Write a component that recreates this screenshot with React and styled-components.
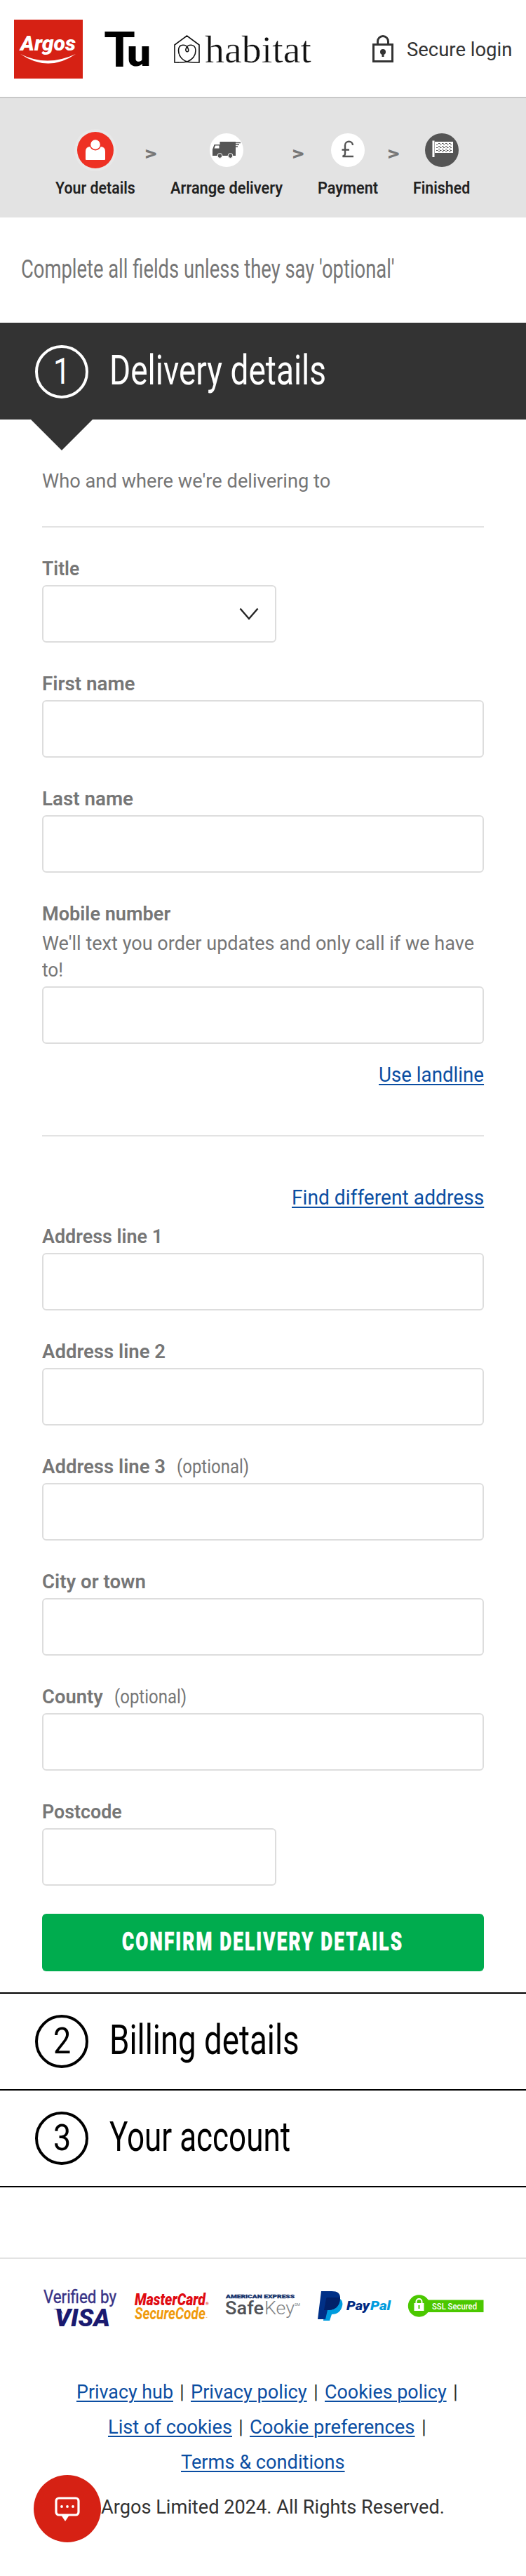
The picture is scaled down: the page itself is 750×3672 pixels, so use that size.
import React, {useLayoutEffect, useRef, useState} from "react";
import styled, {createGlobalStyle} from "styled-components";

const FONT = `Roboto, "Liberation Sans", sans-serif`;

function Fit({width, children}) {
	const ref = useRef();
	const [scale, setScale] = useState(1);

	useLayoutEffect(() => {
		setScale(width / ref.current.offsetWidth);
	}, [width]);

	return (
		<FitBox $width={width}>
			<FitText ref={ref} style={{transform: `scaleX(${scale})`}}>
				{children}
			</FitText>
		</FitBox>
	);
}

function ArgosLogo() {
	return (
		<svg width="98" height="84" viewBox="20 28 98 84">
			<rect x="20" y="28" width="98" height="84" fill="#d62114" />
			<text x="29" y="72" fontSize="30" fontWeight="900" fontStyle="italic" textLength="79" lengthAdjust="spacingAndGlyphs" fill="#fff">Argos</text>
			<path d="M29 77 Q67 96 108 77 Q69 104 29 77Z" fill="#fff" />
		</svg>
	);
}

function TuLogo() {
	return (
		<svg width="66" height="56" viewBox="148 42 66 56">
			<text x="148" y="95" fontSize="71" fontWeight="700" textLength="45" lengthAdjust="spacingAndGlyphs">T</text>
			<text x="181" y="94" fontSize="54" fontWeight="900" textLength="34" lengthAdjust="spacingAndGlyphs">u</text>
		</svg>
	);
}

function HabitatLogo() {
	return (
		<svg width="198" height="46" viewBox="248 47 198 46">
			<g fill="none" stroke="#111" strokeWidth="1.6">
				<path d="M267 88 C262 89 256 89 249 89 V64 L266.500 51 L284 64 V89 C277 89 271 89 267 88 C258 85 254.500 78 254.500 72 C254.500 62 266 62 268.500 70 C270 75 264 75 265 70 C267 62 279 62 279 72 C279 78 276 84 267 88Z" />
			</g>
			<text x="292" y="89" fontSize="55" fontFamily="Liberation Serif, serif" textLength="152" lengthAdjust="spacingAndGlyphs" fill="#111" stroke="#fff" strokeWidth="0.500">habitat</text>
		</svg>
	);
}

function LockIcon() {
	return (
		<svg width="30" height="40" viewBox="0 0 30 40">
			<rect x="1.500" y="13.500" width="27" height="24" fill="none" stroke="#333" strokeWidth="3" />
			<path d="M7.500 13 V9 a7.500 7.500 0 0 1 15 0 V13" fill="none" stroke="#333" strokeWidth="3" />
			<circle cx="15" cy="24" r="4" fill="#333" />
			<path d="M13.500 25 H16.500 V31 H13.500Z" fill="#333" />
		</svg>
	);
}

function PersonIcon() {
	return (
		<svg width="60" height="60" viewBox="0 0 60 60">
			<circle cx="30" cy="30" r="30" fill="#e8e8e8" />
			<circle cx="30" cy="30" r="26" fill="#ee3124" />
			<path d="M16 43 V32 Q16 25 23 25 H37 Q44 25 44 32 V43 Q44 44 43 44 H17 Q16 44 16 43Z" fill="#fff" />
			<circle cx="30" cy="22" r="7.600" fill="#fff" stroke="#ee3124" strokeWidth="1.600" />
		</svg>
	);
}

function VanIcon() {
	return (
		<svg width="60" height="60" viewBox="0 0 60 60">
			<circle cx="30" cy="30" r="24" fill="#fff" />
			<path d="M20.500 18 H43 V38 H10 V29 L12.500 22 H20.500Z" fill="#555" />
			<path d="M12.500 27.500 L14 23.500 H19.500 V27.500Z" fill="#fff" />
			<g fill="#555" stroke="#fff" strokeWidth="1">
				<circle cx="20.500" cy="38" r="3.400" />
				<circle cx="35.500" cy="38" r="3.400" />
			</g>
			<path d="M43 19.500 H50 M43 22.300 H48 M43 25 H46" stroke="#555" strokeWidth="1.500" />
		</svg>
	);
}

function PoundIcon() {
	return (
		<svg width="60" height="60" viewBox="0 0 60 60">
			<circle cx="30" cy="30" r="24" fill="#fff" />
			<path d="M37 23 C37 16 26 16 26 23 V35 Q26 38 22.500 39 H38 M21.500 29.500 H32" fill="none" stroke="#555" strokeWidth="2.400" />
		</svg>
	);
}

function FlagIcon() {
	return (
		<svg width="60" height="60" viewBox="0 0 60 60">
			<circle cx="30" cy="30" r="24" fill="#555" />
			<path d="M16.500 16.500 H19.500 V40 H16.500Z M20 18 H46 V34 H20Z" fill="#fff" />
			<g stroke="#555" strokeWidth="1.100">
				<path d="M25 20.500 H44 M25 24.500 H44 M25 28.500 H44 M25 32 H44" strokeDasharray="2.500 2.500" />
				<path d="M22 22.500 H44 M22 26.500 H44 M22 30.500 H44" strokeDasharray="2.500 2.500" />
			</g>
		</svg>
	);
}

function VisaLogo() {
	return (
		<svg width="108" height="72" viewBox="0 0 108 72">
			<text x="2" y="33" fontSize="25" textLength="104" lengthAdjust="spacingAndGlyphs" fill="#383386" stroke="#383386" strokeWidth="0.400">Verified by</text>
			<text x="18" y="66" fontSize="35" fontWeight="900" fontStyle="italic" textLength="79" lengthAdjust="spacingAndGlyphs" fill="#1a1a70">VISA</text>
			<path d="M16 41 H26 L30 49 Q24 42 16 41Z" fill="#1a1a70" />
		</svg>
	);
}

function MastercardLogo() {
	return (
		<svg width="108" height="72" viewBox="0 0 108 72">
			<text x="1" y="36" fontSize="24" fontWeight="900" fontStyle="italic" textLength="101" lengthAdjust="spacingAndGlyphs" fill="#e00b12">MasterCard</text>
			<text x="102" y="36" fontSize="6" fill="#e00b12">®</text>
			<text x="1" y="56" fontSize="23" fontWeight="700" fontStyle="italic" textLength="101" lengthAdjust="spacingAndGlyphs" fill="#f09a0c">SecureCode</text>
			<text x="102" y="56" fontSize="5" fill="#f09a0c">™</text>
		</svg>
	);
}

function SafeKeyLogo() {
	return (
		<svg width="108" height="72" viewBox="0 0 108 72">
			<text x="1" y="25.500" fontSize="7" fontWeight="900" textLength="98" lengthAdjust="spacingAndGlyphs" fill="#16336b" stroke="#16336b" strokeWidth="0.300">AMERICAN EXPRESS</text>
			<text x="0" y="49" fontSize="26" fontWeight="500" textLength="55" lengthAdjust="spacingAndGlyphs" fill="#505257">Safe</text>
			<text x="56" y="49" fontSize="26" fontWeight="300" textLength="43" lengthAdjust="spacingAndGlyphs" fill="#808285">Key</text>
			<text x="99" y="37" fontSize="6" textLength="8" lengthAdjust="spacingAndGlyphs" fill="#808285">SM</text>
		</svg>
	);
}

function PaypalLogo() {
	return (
		<svg width="108" height="72" viewBox="0 0 108 72">
			<path d="M12 25 H30 Q38 29 36 37 Q33 49 21 49 L18 58 H9Z" fill="#009cde" />
			<path d="M6 16 H21 Q34 16 33 27 Q32 42 17 43 H15 L12 56 H1Z" fill="#003087" />
			<path d="M13 27 Q13 25 15 25 H33 Q32 42 17 43 H10Z" fill="#012169" />
			<text x="42" y="43" fontSize="19" fontWeight="900" fontStyle="italic" textLength="33" lengthAdjust="spacingAndGlyphs" fill="#012b83">Pay</text>
			<text x="76" y="43" fontSize="19" fontWeight="900" fontStyle="italic" textLength="29" lengthAdjust="spacingAndGlyphs" fill="#009cde">Pal</text>
		</svg>
	);
}

function SslLogo() {
	return (
		<svg width="108" height="72" viewBox="0 0 108 72">
			<path d="M22 28.500 H107.500 V46 H22Z" fill="#4bc800" />
			<circle cx="15.500" cy="37" r="15.700" fill="#4bc800" />
			<rect x="8.500" y="33" width="14" height="11" fill="#fff" />
			<path d="M11.500 34 V31 a4 4 0 0 1 8 0 V34" fill="none" stroke="#fff" strokeWidth="2" />
			<path d="M15.500 36 V41" stroke="#4bc800" strokeWidth="2" />
			<text x="34" y="42" fontSize="13" fontWeight="500" textLength="64" lengthAdjust="spacingAndGlyphs" fill="#fff">SSL Secured</text>
		</svg>
	);
}

function ChatIcon() {
	return (
		<svg width="38" height="38" viewBox="0 0 38 38">
			<rect x="3" y="4" width="32" height="24" rx="4" fill="none" stroke="#fff" strokeWidth="3.200" />
			<path d="M10 28 H22 L16 37Z" fill="#fff" />
			<g fill="#fff">
				<circle cx="11" cy="16" r="1.900" />
				<circle cx="19" cy="16" r="1.900" />
				<circle cx="27" cy="16" r="1.900" />
			</g>
		</svg>
	);
}

const steps = [
	{label: "Your details", width: 114, Icon: PersonIcon},
	{label: "Arrange delivery", width: 160, Icon: VanIcon},
	{label: "Payment", width: 86, Icon: PoundIcon},
	{label: "Finished", width: 81, Icon: FlagIcon},
];

const addressFields = [
	{label: "Address line 1", width: 172},
	{label: "Address line 2", width: 176},
	{label: "Address line 3", width: 176, optional: true},
	{label: "City or town", width: 148},
	{label: "County", width: 87, optional: true},
	{label: "Postcode", width: 114, small: true},
];

const footerLinks = [
	[
		{label: "Privacy hub", width: 138},
		{label: "Privacy policy", width: 166},
		{label: "Cookies policy", width: 174},
	],
	[
		{label: "List of cookies", width: 177},
		{label: "Cookie preferences", width: 236},
	],
	[{label: "Terms & conditions", width: 234}],
];

function Field({label, width, optional, small, help, children}) {
	return (
		<FieldRow>
			<Label>
				<Fit width={width}>{label}</Fit>
				{optional && (
					<Optional>
						<Fit width={103}>(optional)</Fit>
					</Optional>
				)}
			</Label>
			{help}
			{children || <Input $small={small} aria-label={label} />}
		</FieldRow>
	);
}

function Section({number, title, width, active}) {
	return (
		<SectionBar $active={active}>
			<SectionNumber>
				<Fit width={number === 1 ? 24 : 25}>{number}</Fit>
			</SectionNumber>
			<SectionTitle>
				<Fit width={width}>{title}</Fit>
			</SectionTitle>
		</SectionBar>
	);
}

export default function App() {
	return (
		<Page>
			<GlobalStyle />
			<Header>
				<Brands>
					<ArgosLogo />
					<TuLogo />
					<HabitatLogo />
				</Brands>
				<Login>
					<LockIcon />
					<Fit width={150}>Secure login</Fit>
				</Login>
			</Header>
			<Steps>
				{steps.map(({label, width, Icon}, i) => (
					<React.Fragment key={label}>
						{i > 0 && (
							<StepArrow>
								<Fit width={17}>&gt;</Fit>
							</StepArrow>
						)}
						<Step $width={width}>
							<Icon />
							<StepLabel>
								<Fit width={width}>{label}</Fit>
							</StepLabel>
						</Step>
					</React.Fragment>
				))}
			</Steps>
			<Intro>
				<Fit width={533}>Complete all fields unless they say 'optional'</Fit>
			</Intro>
			<Section number={1} title="Delivery details" width={309} active />
			<Form>
				<Lead>
					<Fit width={411}>Who and where we're delivering to</Fit>
				</Lead>
				<Divider />
				{/* Contact */}
				<Fields>
					<Field label="Title" width={53}>
						<SelectBox>
							<svg width="28" height="20" viewBox="0 0 28 20">
								<path d="M1.500 1.500 L14 16 L26.500 1.500" fill="none" stroke="#222" strokeWidth="2.400" />
							</svg>
						</SelectBox>
					</Field>
					<Field label="First name" width={133} />
					<Field label="Last name" width={130} />
					<Field
						label="Mobile number"
						width={183}
						help={
							<Help>
								<Fit width={616}>We'll text you order updates and only call if we have</Fit>
								<Fit width={30}>to!</Fit>
							</Help>
						}
					/>
				</Fields>
				<LinkRow $top={-14} $bottom={66}>
					<Fit width={150}>Use landline</Fit>
				</LinkRow>
				<Divider />
				{/* Address */}
				<LinkRow $top={67} $bottom={15}>
					<Fit width={274}>Find different address</Fit>
				</LinkRow>
				{addressFields.map((field) => (
					<Field key={field.label} {...field} />
				))}
				<Confirm>
					<Fit width={401}>CONFIRM DELIVERY DETAILS</Fit>
				</Confirm>
			</Form>
			<Section number={2} title="Billing details" width={271} />
			<Section number={3} title="Your account" width={258} />
			<Footer>
				<Badges>
					<VisaLogo />
					<MastercardLogo />
					<SafeKeyLogo />
					<PaypalLogo />
					<SslLogo />
				</Badges>
				{footerLinks.map((row, i) => (
					<FooterRow key={i} $shift={i < 2}>
						{row.map(({label, width}) => (
							<React.Fragment key={label}>
								<FooterLink>
									<Fit width={width}>{label}</Fit>
								</FooterLink>
								{i < 2 && <Pipe>|</Pipe>}
							</React.Fragment>
						))}
					</FooterRow>
				))}
				<Copyright>
					<Fit width={22}>©</Fit>
					<Fit width={490}>Argos Limited 2024. All Rights Reserved.</Fit>
				</Copyright>
			</Footer>
			<ChatButton>
				<ChatIcon />
			</ChatButton>
		</Page>
	);
}

const GlobalStyle = createGlobalStyle`
	* {
		box-sizing: border-box;
	}
	body {
		margin: 0;
		background: #fff;
	}
	svg {
		display: block;
		flex: none;
		overflow: visible;
	}
`;

const Page = styled.div`
	position: relative;
	width: 750px;
	height: 3672px;
	overflow: hidden;
	font-family: ${FONT};
	font-size: 28px;
	color: #333;
`;

const FitBox = styled.span`
	display: block;
	flex: none;
	width: ${({$width}) => $width}px;
`;

const FitText = styled.span`
	display: inline-block;
	vertical-align: top;
	white-space: nowrap;
	transform-origin: 0 0;
	text-decoration: inherit;
`;

const Header = styled.header`
	display: flex;
	align-items: center;
	justify-content: space-between;
	height: 140px;
	padding: 2px 20px 0;
	border-bottom: 2px solid #c8c8c8;
`;

const Brands = styled.div`
	display: flex;
	align-items: center;
	gap: 30px;
	svg:last-child {
		margin-left: 4px;
	}
`;

const Login = styled.a`
	display: flex;
	align-items: center;
	gap: 19px;
`;

const Steps = styled.nav`
	display: flex;
	justify-content: center;
	height: 170px;
	padding: 44px 1px 0 0;
	background: #e3e3e3;
`;

const Step = styled.div`
	display: flex;
	flex-direction: column;
	align-items: center;
	width: ${({$width}) => $width}px;
`;

const StepLabel = styled.div`
	margin-top: 9px;
	font-size: 24px;
	font-weight: 600;
	line-height: 30px;
	color: #222;
`;

const StepArrow = styled.div`
	width: 50px;
	padding: 20px 0 0 13px;
	font-size: 28px;
	font-weight: 700;
	line-height: 30px;
	color: #777;
`;

const Intro = styled.div`
	height: 150px;
	padding: 49px 0 0 30px;
	font-size: 36px;
	line-height: 50px;
	color: #767676;
`;

const SectionBar = styled.div`
	position: relative;
	display: flex;
	align-items: center;
	gap: 30px;
	height: 138px;
	padding-left: 50px;
	border-top: 2px solid ${({$active}) => ($active ? "#333" : "#000")};
	background: ${({$active}) => ($active ? "#333" : "#fff")};
	color: ${({$active}) => ($active ? "#fff" : "#000")};
	&::after {
		content: "";
		display: ${({$active}) => ($active ? "block" : "none")};
		position: absolute;
		top: 136px;
		left: 44px;
		border: 44px solid transparent;
		border-top-color: #333;
		border-bottom: 0;
	}
`;

const SectionNumber = styled.div`
	display: flex;
	align-items: center;
	justify-content: center;
	width: 76px;
	height: 76px;
	border: 4px solid currentColor;
	border-radius: 50%;
	font-size: 52px;
	line-height: 68px;
`;

const SectionTitle = styled.div`
	padding-bottom: 5px;
	font-size: 60px;
	line-height: 70px;
`;

const Form = styled.form`
	height: 2242px;
	padding: 68px 60px 0;
	color: #767676;
`;

const Lead = styled.div`
	margin-bottom: 44px;
	line-height: 40px;
`;

const Divider = styled.div`
	height: 2px;
	background: #e3e3e3;
`;

const Fields = styled.div`
	padding-top: 38px;
`;

const FieldRow = styled.div`
	margin-bottom: 38px;
`;

const Label = styled.label`
	display: flex;
	padding-top: 1px;
	margin-bottom: 3px;
	font-weight: 600;
	line-height: 40px;
`;

const Optional = styled.span`
	margin-left: 16px;
	font-size: 27px;
	font-weight: 400;
`;

const Help = styled.div`
	margin-bottom: 4px;
	line-height: 38px;
`;

const Input = styled.input`
	display: block;
	width: ${({$small}) => ($small ? "334px" : "100%")};
	height: 82px;
	border: 2px solid #ddd;
	border-radius: 6px;
	background: #fff;
`;

const SelectBox = styled.div`
	display: flex;
	align-items: center;
	justify-content: flex-end;
	width: 334px;
	height: 82px;
	padding: 2px 23px 0 0;
	border: 2px solid #ddd;
	border-radius: 6px;
`;

const LinkRow = styled.div`
	display: flex;
	justify-content: flex-end;
	margin: ${({$top, $bottom}) => `${$top}px 0 ${$bottom}px`};
	font-size: 29px;
	line-height: 40px;
	color: #0b4ea2;
	text-decoration: underline;
	text-decoration-thickness: 2px;
	text-underline-offset: 3px;
	text-decoration-skip-ink: none;
	span {
		text-decoration: inherit;
	}
`;

const Confirm = styled.button`
	display: flex;
	align-items: center;
	justify-content: center;
	width: 100%;
	height: 82px;
	margin-top: 40px;
	padding: 0 2px 2px 0;
	border: 0;
	border-radius: 6px;
	background: #00ac4e;
	color: #fff;
	font-family: ${FONT};
	font-size: 36px;
	font-weight: 900;
	letter-spacing: 3px;
	-webkit-text-stroke: 0.6px #fff;
`;

const Footer = styled.footer`
	padding-top: 100px;
	border-top: 2px solid #000;
`;

const Badges = styled.div`
	display: flex;
	justify-content: space-between;
	height: 167px;
	padding: 30px 60px 0;
	border-top: 2px solid #e3e3e3;
`;

const FooterRow = styled.div`
	display: flex;
	justify-content: center;
	height: 50px;
	padding-left: ${({$shift}) => ($shift ? 21 : 0)}px;
	line-height: 50px;
`;

const FooterLink = styled.a`
	color: #0b4ea2;
	text-decoration: underline;
	text-decoration-thickness: 2px;
	text-underline-offset: 3px;
	span {
		text-decoration: inherit;
	}
`;

const Pipe = styled.span`
	width: 25px;
	text-align: center;
`;

const Copyright = styled.div`
	display: flex;
	justify-content: center;
	gap: 6px;
	padding-top: 14px;
	line-height: 50px;
`;

const ChatButton = styled.button`
	position: absolute;
	top: 3528px;
	left: 48px;
	display: flex;
	align-items: center;
	justify-content: center;
	width: 96px;
	height: 96px;
	border: 0;
	border-radius: 50%;
	background: #d62114;
`;
